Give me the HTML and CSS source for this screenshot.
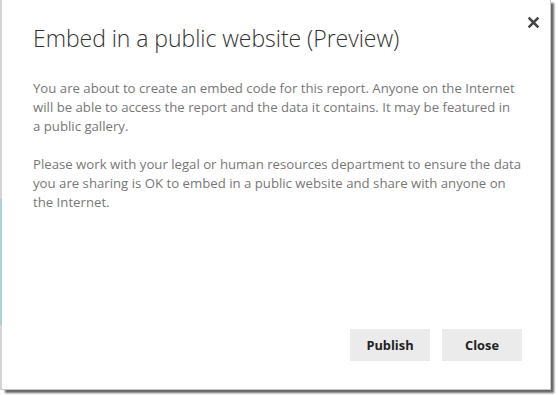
FILE: index.html
```html
<!DOCTYPE html>
<html>
<head>
<meta charset="utf-8">
<link rel="stylesheet" href="styles.css">
</head>
<body>
<div class="page">
  <div class="backdrop"><div class="accent"></div></div>
  <div class="dialog">
    <button class="close-x" aria-label="Close">
      <svg width="12" height="12" viewBox="0 0 12 12"><path d="M1.5 1.5 L10.5 10.5 M10.5 1.5 L1.5 10.5" stroke="#444" stroke-width="2.4" stroke-linecap="butt"/></svg>
    </button>
    <h1 class="title">Embed in a public website (Preview)</h1>
    <div class="body">
      <p>You are about to create an embed code for this report. Anyone on the Internet<br>will be able to access the report and the data it contains. It may be featured in<br>a public gallery.</p>
      <p>Please work with your legal or human resources department to ensure the data<br>you are sharing is OK to embed in a public website and share with anyone on<br>the Internet.</p>
    </div>
    <div class="actions">
      <button class="btn">Publish</button>
      <button class="btn">Close</button>
    </div>
  </div>
</div>
</body>
</html>
```
FILE: styles.css
```css
html, body {
  margin: 0;
  padding: 0;
  background: #fff;
}
body {
  width: 558px;
  height: 395px;
  overflow: hidden;
  font-family: "Open Sans", "Noto Sans", sans-serif;
}
.page {
  display: flex;
  align-items: flex-start;
}
.backdrop {
  width: 2px;
  height: 390px;
  background: #d4d4d4;
  display: flex;
  flex-direction: column;
  padding-top: 199px;
  box-sizing: border-box;
}
.accent {
  width: 2px;
  height: 126px;
  background: #a9d3d0;
}
.dialog {
  position: relative;
  width: 549px;
  height: 390px;
  box-sizing: border-box;
  background: #fff;
  border-right: 1px solid #c8c8c8;
  border-bottom: 1px solid #c8c8c8;
  box-shadow: 3px 3px 2px rgba(0,0,0,0.6);
  padding: 22px 28px 0 31px;
  display: flex;
  flex-direction: column;
}
.close-x {
  position: absolute;
  top: 14px;
  right: 9px;
  width: 16px;
  height: 16px;
  padding: 0;
  border: 0;
  background: none;
  display: flex;
  align-items: center;
  justify-content: center;
}
.close-x svg {
  width: 13px;
  height: 13px;
}
.title {
  margin: 0;
  font-weight: 300;
  font-size: 23px;
  line-height: 32px;
  color: #333;
  letter-spacing: -0.05px;
}
.body {
  margin-top: 25px;
  font-size: 13.2px;
  line-height: 19px;
  color: #777;
}
.body p {
  margin: 0 0 19px 0;
}
.actions {
  margin-top: auto;
  margin-bottom: 28px;
  display: flex;
  justify-content: flex-end;
  gap: 12px;
}
.btn {
  width: 80px;
  height: 32px;
  border: 0;
  background: #ebebeb;
  font-family: "Open Sans", "Noto Sans", sans-serif;
  font-weight: 700;
  font-size: 12.8px;
  color: #222;
  padding: 0;
}
```
